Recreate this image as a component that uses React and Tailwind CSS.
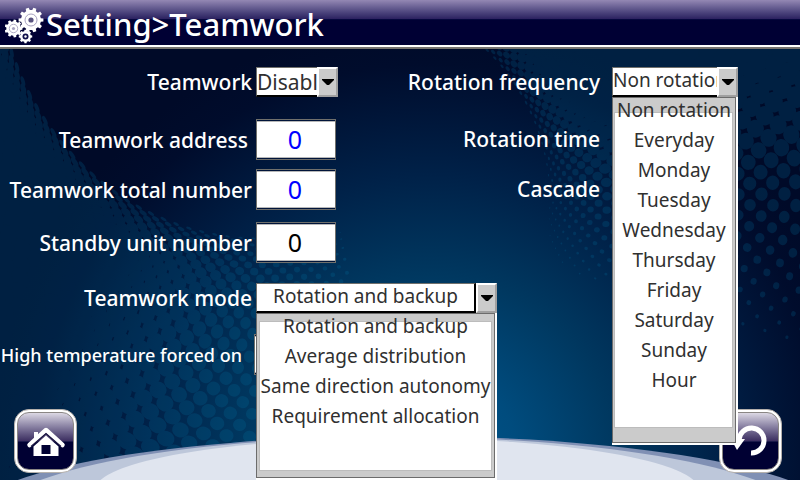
import React from "react";

const MODES = ["Rotation and backup", "Average distribution", "Same direction autonomy", "Requirement allocation"];
const FREQUENCIES = [
  "Non rotation", "Everyday", "Monday", "Tuesday", "Wednesday",
  "Thursday", "Friday", "Saturday", "Sunday", "Hour",
];

// Dots on rings round a centre; the rings spread out as they grow.
function ringDots(cx, cy, start, count, from, to, sizeAt, flare) {
  const dots = [];
  const step = 0.052;
  let radius = start;
  for (let ring = 0; ring < count; ring++) {
    const gap = Math.min(3 + ring * 0.6, 11.5);
    for (let a = from + (ring % 2 ? step / 2 : 0); a < to; a += step) {
      const size = sizeAt(a, ring);
      if (size < 0.06) continue;
      const reach = radius + flare * Math.max(0, a - 1.6);
      const x = cx + reach * Math.cos(a);
      const y = cy + reach * Math.sin(a);
      if (x < -15 || x > 815 || y < 40 || y > 490) continue;
      dots.push({ x, y, rx: gap * 1.8 * size, ry: reach * step * size, turn: (a * 180) / Math.PI });
    }
    radius += gap;
  }
  return dots;
}

const clamp = (v, low, high) => Math.max(low, Math.min(high, v));
const LEFT_DOTS = ringDots(300, 0, 236, 44, 1.4, 3.2, (a, ring) => clamp(0.24 + (a - 1.6) * 0.5, 0.14, 0.7) * clamp(0.5 + ring / 16, 0.5, 1), 42);
const RIGHT_DOTS = ringDots(340, 200, 210, 34, -0.95, 0.5, (a, ring) => clamp(0.29 - a * 0.72, 0, 0.66) * clamp(0.3 + ring / 14, 0.3, 1), 0);

function Dots({ dots }) {
  return dots.map((d, i) => (
    <ellipse key={i} cx={d.x.toFixed(1)} cy={d.y.toFixed(1)} rx={d.rx.toFixed(1)} ry={d.ry.toFixed(1)}
      transform={`rotate(${d.turn.toFixed(1)} ${d.x.toFixed(1)} ${d.y.toFixed(1)})`} />
  ));
}

function Backdrop() {
  return (
    <svg className="absolute inset-0 h-full w-full" viewBox="0 0 800 480" preserveAspectRatio="none" aria-hidden="true">
      <defs>
        <radialGradient id="glow" gradientUnits="userSpaceOnUse" cx="430" cy="460" r="440">
          <stop offset="0" stopColor="#00568c" />
          <stop offset="0.2" stopColor="#004c7e" />
          <stop offset="0.42" stopColor="#003860" />
          <stop offset="0.65" stopColor="#002148" />
          <stop offset="0.9" stopColor="#000c2c" />
          <stop offset="1" stopColor="#000a28" />
        </radialGradient>
      </defs>
      <rect width="800" height="480" fill="url(#glow)" />
      <g fill="#0078a8" opacity="0.2"><Dots dots={RIGHT_DOTS} /></g>
      <g fill="#0078a8" opacity="0.2"><Dots dots={LEFT_DOTS} /></g>
      <ellipse cx="403" cy="520" rx="438" ry="84" fill="#8090b4" />
      <ellipse cx="398" cy="520" rx="408" ry="83" fill="#bdc7da" />
      <ellipse cx="397" cy="490" rx="302" ry="52" fill="#e0e5ef" />
    </svg>
  );
}

function gearPath(cx, cy, r, teeth) {
  const points = [];
  for (let i = 0; i < teeth; i++) {
    [[-0.3, 0.8], [-0.2, 1], [0.2, 1], [0.3, 0.8]].forEach(([shift, k]) => {
      const a = ((i + shift) / teeth) * Math.PI * 2;
      points.push(`${(cx + r * k * Math.cos(a)).toFixed(2)} ${(cy + r * k * Math.sin(a)).toFixed(2)}`);
    });
  }
  return `M${points.join("L")}Z`;
}

function Gears() {
  return (
    <svg className="h-[42px] w-[41px] shrink-0" viewBox="0 0 41 42" fill="#fff" aria-hidden="true">
      <path d={gearPath(26, 17, 12.5, 10)} />
      <circle cx="26" cy="17" r="6" fill="none" stroke="#a8a2c0" strokeWidth="1" />
      <circle cx="26" cy="17" r="2.6" fill="#5a5480" />
      <path d={gearPath(8.5, 25.5, 9, 9)} />
      <circle cx="8.5" cy="25.5" r="4.2" fill="none" stroke="#b4b0c8" strokeWidth="1" />
      <circle cx="8.5" cy="25.5" r="1.6" fill="#a8a4c0" />
      <path d={gearPath(20.5, 33.5, 6.8, 8)} />
      <circle cx="20.5" cy="33.5" r="3" fill="#10104a" />
      <circle cx="20.5" cy="33.5" r="1.2" fill="#fff" />
    </svg>
  );
}

function Row({ id, label, gap = "pr-1", size = "text-[21px]", space = "", width = "w-64", children }) {
  return (
    <div className={`flex items-center ${space}`}>
      <label htmlFor={id} className={`shrink-0 whitespace-nowrap text-right leading-6 font-medium text-white ${width} ${gap} ${size}`}>{label}</label>
      {children}
    </div>
  );
}

function NumberBox({ id, color }) {
  return (
    <span className="h-[41px] w-20 border border-[#70706c] bg-[#00143a] py-px">
      <input id={id} type="text" inputMode="numeric" defaultValue="0"
        className={`block h-full w-full border-y border-[#b8b8b8] bg-white pr-0.5 pb-0.5 text-center text-[25px] outline-none ${color}`} />
    </span>
  );
}

function Combo({ id, options, width, text, frame = "", children }) {
  return (
    <div className={`relative flex h-[30px] shrink-0 ${width}`}>
      <select id={id} className={`min-w-0 flex-1 appearance-none overflow-hidden border-t border-b-2 border-l border-t-[#70706c] border-b-black border-l-[#70706c] bg-white text-[#303030] outline-none ${text} ${frame}`}>
        {options.map((o) => <option key={o}>{o}</option>)}
      </select>
      <button type="button" aria-label="Open list" className="flex w-[21px] shrink-0 items-center justify-center border-2 border-t-white border-r-[#a0a0a0] border-b-[#a0a0a0] border-l-white bg-[#cbcbcb]">
        <svg className="h-[6px] w-3" viewBox="0 0 12 6" aria-hidden="true"><path d="M0 0h12v1L7 6H5L0 1z" /></svg>
      </button>
      {children}
    </div>
  );
}

function Menu({ label, options, height, panel }) {
  return (
    <div className={`absolute inset-x-0 top-full z-10 border-b-2 border-r-2 border-white bg-[#cbcbcb] ${height}`}>
      <div className="relative h-full border border-[#6c6c6c]">
        <div className={`absolute border border-[#bcbcbc] bg-white ${panel}`} />
        <ul role="listbox" aria-label={label} className="relative -mt-[3px]">
          {options.map((o, i) => (
            <li key={o} role="option" aria-selected={i === 0} className="flex h-[30px] justify-center text-[19px] leading-[30px] whitespace-nowrap text-[#303030]">{o}</li>
          ))}
        </ul>
      </div>
    </div>
  );
}

function KeyButton({ label, children }) {
  return (
    <button type="button" aria-label={label} className="h-16 w-[63px] rounded-[15px] border border-[#b4b0ac] bg-white p-[2px]">
      <span className="flex h-full w-full items-center justify-center rounded-xl border border-[#8a8684] bg-linear-to-b from-[#dcd8e4] via-[#3c2e60] via-50% to-[#000033] to-52%">
        {children}
      </span>
    </button>
  );
}

export default function App() {
  return (
    <div className="relative flex min-h-screen flex-col overflow-hidden bg-[#000a28] font-['Noto_Sans','Open_Sans',sans-serif]">
      <Backdrop />
      <header className="relative flex h-[49px] items-center border-b-2 border-[#77736f] bg-linear-to-b from-[#9488b4] via-[#2c2260] via-40% to-[#000034] to-42% pl-[5px] shadow-[inset_0_-2px_0_#fff]">
        <Gears />
        <h1 className="text-[31px] leading-10 font-medium text-white">Setting&gt;Teamwork</h1>
      </header>

      <main className="relative z-10 grid grid-cols-2 pt-[18px]">
        <section className="min-w-0">
          <Row id="teamwork" label="Teamwork">
            <Combo id="teamwork" options={["Disable", "Enable"]} width="w-[82px]" text="text-[21px] leading-[26px]" />
          </Row>
          <Row id="address" label="Teamwork address" gap="pr-2" space="mt-[22px]">
            <NumberBox id="address" color="text-[#0000ff]" />
          </Row>
          <Row id="total" label="Teamwork total number" space="mt-[9px]">
            <NumberBox id="total" color="text-[#0000ff]" />
          </Row>
          <Row id="standby" label="Standby unit number" space="mt-3">
            <NumberBox id="standby" color="text-black" />
          </Row>
          <Row id="mode" label="Teamwork mode" space="mt-5">
            <Combo id="mode" options={MODES} width="w-[241px]" text="pb-1 text-center text-[19px] leading-[24px]" frame="border-x-2 border-x-black">
              <Menu label="Teamwork mode" options={MODES} height="h-[167px]" panel="inset-x-[2px] top-[7px] bottom-[6px]" />
            </Combo>
          </Row>
          <Row id="forced" label="High temperature forced on" gap="pr-3" size="text-lg" space="mt-[21px]" width="w-[254px]">
            <NumberBox id="forced" color="text-black" />
          </Row>
        </section>

        <section className="min-w-0">
          <Row id="frequency" label="Rotation frequency" gap="pr-3" width="w-[212px]">
            <Combo id="frequency" options={FREQUENCIES} width="w-[126px]" text="pb-1 text-[19px] leading-[24px]">
              <Menu label="Rotation frequency" options={FREQUENCIES} height="h-[348px]" panel="left-px right-[2px] top-[14px] bottom-[14px]" />
            </Combo>
          </Row>
          <div className="mt-[30px] w-[212px] pr-3 text-right text-[21px] leading-6 font-medium text-white">Rotation time</div>
          <div className="mt-[26px] w-[212px] pr-3 text-right text-[21px] leading-6 font-medium text-white">Cascade</div>
        </section>
      </main>

      <footer className="relative mt-auto flex justify-between pr-[18px] pb-[7px] pl-[14px]">
        <KeyButton label="Home">
          <svg className="h-8 w-10" viewBox="0 0 40 32" fill="#fff" aria-hidden="true">
            <path d="M8 7h4v5l-4 4z" />
            <path d="M3.500 20 20 5l16.500 15" fill="none" stroke="#fff" strokeWidth="4.500" strokeLinecap="round" strokeLinejoin="round" />
            <path d="M7.500 21.500 20 10.500l12.500 11V31H7.500z" />
            <path d="M5 21.500 20 8.500l15 13" fill="none" stroke="#1a1440" strokeWidth="1.200" />
            <path d="M15.500 20h9v9h-9z" fill="#000033" />
          </svg>
        </KeyButton>
        <KeyButton label="Back">
          <svg className="h-9 w-9" viewBox="0 0 36 36" aria-hidden="true">
            <path d="M6 17A12.500 12.500 0 1 1 18 30" fill="none" stroke="#fff" strokeWidth="5" />
            <path d="M-2 16h14L4 27z" fill="#fff" />
          </svg>
        </KeyButton>
      </footer>
    </div>
  );
}
